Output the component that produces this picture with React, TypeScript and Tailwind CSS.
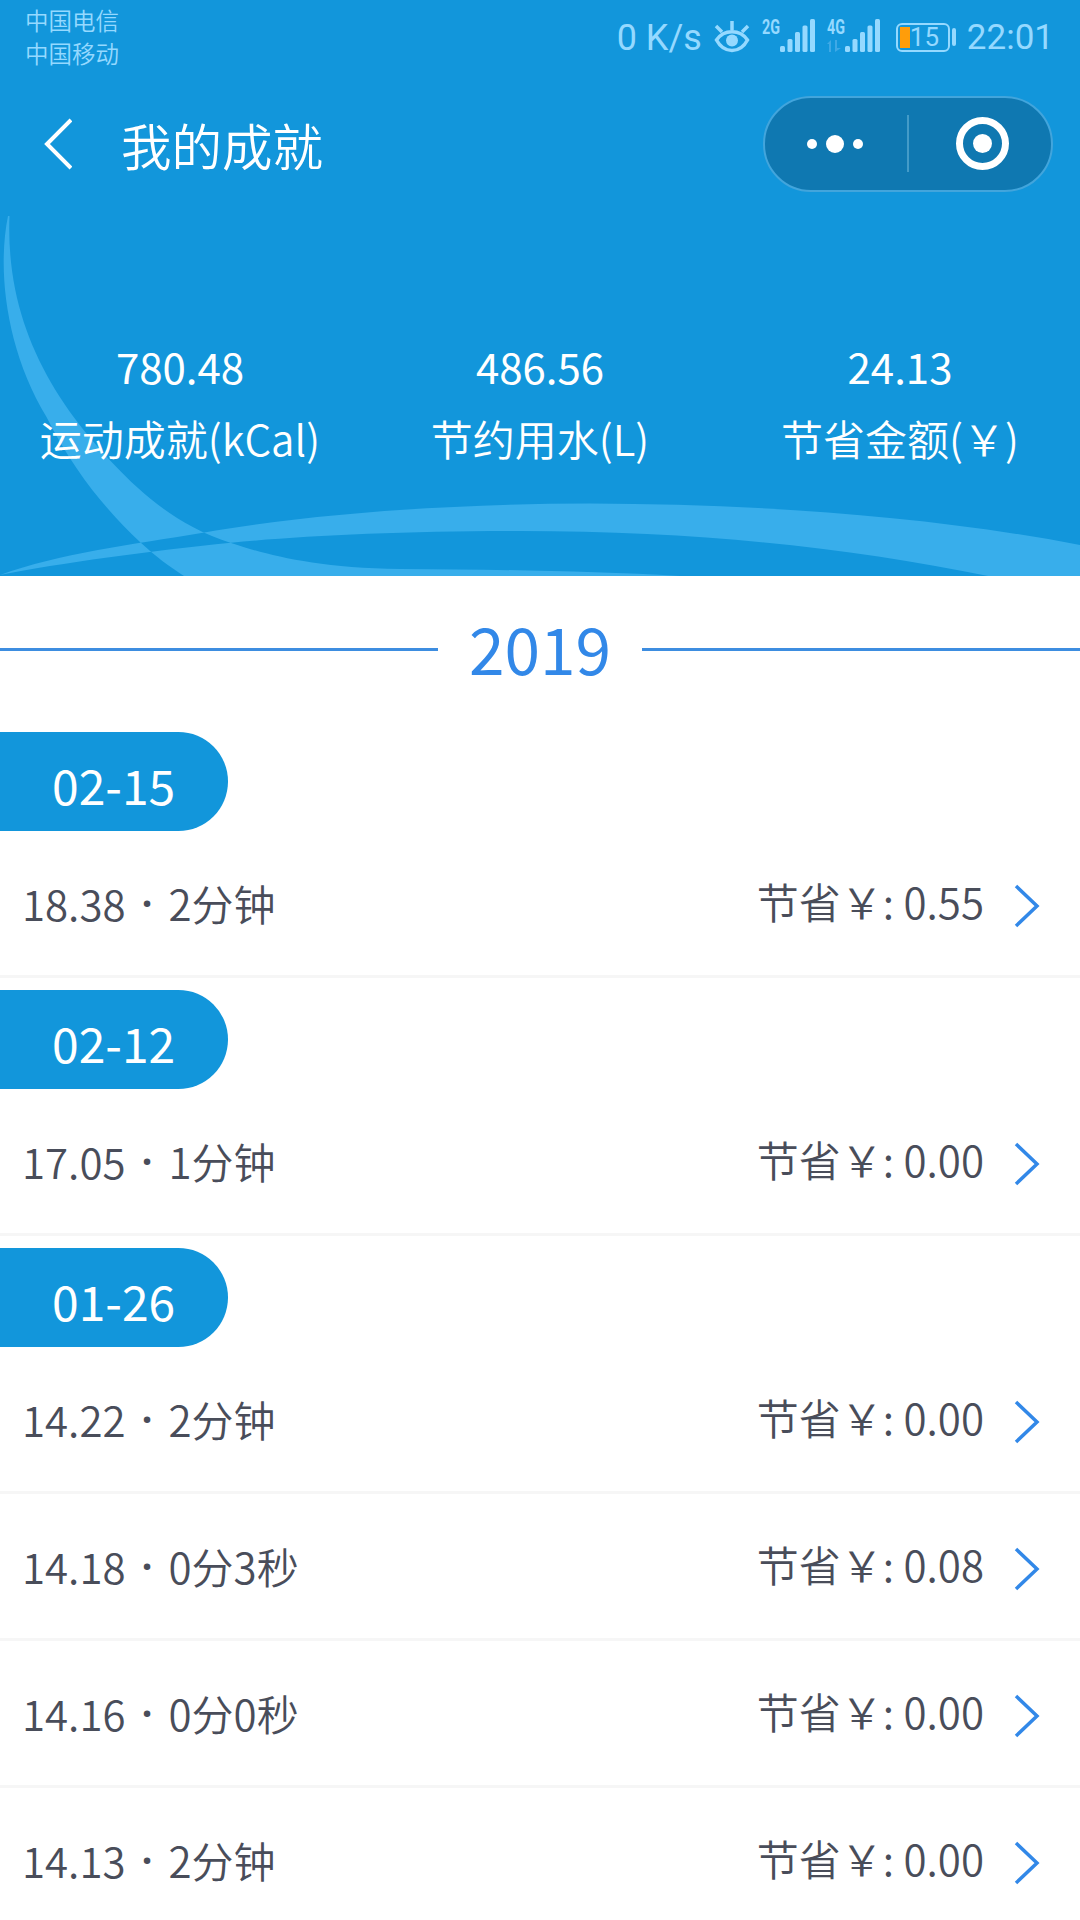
import React from 'react';

interface Entry {
  time: string;
  duration: string;
  saved: string;
}

interface Day {
  date: string;
  entries: Entry[];
}

const stats = [
  { value: '780.48', label: '运动成就(kCal)' },
  { value: '486.56', label: '节约用水(L)' },
  { value: '24.13', label: '节省金额(￥)' },
];

const days: Day[] = [
  { date: '02-15', entries: [{ time: '18.38', duration: '2分钟', saved: '0.55' }] },
  { date: '02-12', entries: [{ time: '17.05', duration: '1分钟', saved: '0.00' }] },
  {
    date: '01-26',
    entries: [
      { time: '14.22', duration: '2分钟', saved: '0.00' },
      { time: '14.18', duration: '0分3秒', saved: '0.08' },
      { time: '14.16', duration: '0分0秒', saved: '0.00' },
      { time: '14.13', duration: '2分钟', saved: '0.00' },
    ],
  },
];

const Signal = ({ label, data }: { label: string; data?: boolean }) => (
  <svg className="overflow-visible" width="54" height="36" viewBox="0 1 54 36" fill="#95d9ff">
    <text x="1" y="15.500" fontFamily="Roboto" fontSize="20" fontWeight="700" textLength="18" lengthAdjust="spacingAndGlyphs">
      {label}
    </text>
    {data && (
      <g fill="#3fa9e6">
        <path d="M1 26l4-4v12h-2v-8z" />
        <path d="M9 22h2v8h4l-6 4z" />
      </g>
    )}
    <rect x="19" y="28" width="5" height="6" rx="1.5" />
    <rect x="26.500" y="21" width="5" height="13" rx="1.5" />
    <rect x="34" y="14" width="5" height="20" rx="1.5" />
    <rect x="41.500" y="7.500" width="5" height="26.500" rx="1.5" />
    <rect x="49" y="1" width="5" height="33" rx="1.5" />
  </svg>
);

const StatusBar = () => (
  <div className="flex h-[75px] justify-between pl-[25px] pr-[26px] text-[#95d9ff]">
    <div className="flex flex-col pt-1 text-[23.5px] leading-[33px] font-[350]">
      <span>中国电信</span>
      <span>中国移动</span>
    </div>
    <div className="flex h-[74px] items-center font-[Roboto] text-[35px]">
      <span className="mr-[12px] pt-[2px] text-[36px]">0 K/s</span>
      <svg className="mr-[11px]" width="36" height="32" viewBox="0 0 36 32" fill="none" stroke="#95d9ff" strokeWidth="3.500">
        <path d="M2.500 19C10 8 26 8 33.500 19C26 33 10 33 2.500 19z" />
        <path d="M18 0v9M2 5l6 6M34 5l-6 6" />
        <circle cx="18" cy="19.500" r="6" fill="#95d9ff" stroke="none" />
      </svg>
      <span className="mr-[11px]"><Signal label="2G" /></span>
      <span className="mr-[16px]"><Signal label="4G" data /></span>
      <div className="mr-[11px] flex items-center gap-[2px]">
        <div className="flex h-[29px] w-[54px] items-center rounded-[6px] border-2 border-[#95d9ff] pl-[2px]">
          <span className="h-[21px] w-[10px] bg-[#ff9d0a]" />
          <span className="text-[26px] leading-none">15</span>
        </div>
        <span className="h-[18px] w-[4px] rounded-full bg-[#95d9ff]" />
      </div>
      <span className="pt-[2px]">22:01</span>
    </div>
  </div>
);

const TitleBar = () => (
  <div className="flex h-[140px] items-center pl-[44px] pr-[27px] pb-[3px]">
    <svg width="28" height="52" viewBox="0 0 28 52" fill="none" stroke="#fff" strokeWidth="4">
      <path d="M27 2L3 26L27 50" />
    </svg>
    <h1 className="ml-[49px] pt-px text-[50.5px] leading-none font-[350]">我的成就</h1>
    <div className="ml-auto flex h-[96px] w-[290px] items-center rounded-full border-2 border-[#42a5dc] bg-[#0f78b1]">
      <div className="flex w-[142px] items-center justify-center gap-[9px] pr-[2px]">
        <span className="size-[10px] rounded-full bg-white" />
        <span className="size-[18px] rounded-full bg-white" />
        <span className="size-[10px] rounded-full bg-white" />
      </div>
      <span className="h-[57px] w-[2px] bg-[#439bc8]" />
      <div className="flex flex-1 items-center justify-center pl-[5px]">
        <div className="flex size-[53px] items-center justify-center rounded-full border-[7px] border-white">
          <span className="size-[19px] rounded-full bg-white" />
        </div>
      </div>
    </div>
  </div>
);

const Chevron = () => (
  <svg className="mt-[5px]" width="26" height="44" viewBox="0 0 26 44" fill="none" stroke="#3288e8" strokeWidth="3.500">
    <path d="M2 2L23 22L2 42" />
  </svg>
);

const App = () => {
  return (
    <main className="h-[1920px] w-[1080px] overflow-hidden bg-white font-['Noto_Sans_CJK_SC',sans-serif] text-white">
      <header className="relative h-[576px] bg-[#1296db]">
        {/* crossing ribbons, even-odd so the overlap drops out */}
        <svg className="absolute inset-0" width="1080" height="576" viewBox="0 0 1080 576">
          <path
            fill="#38aeeb"
            fillRule="evenodd"
            d="M8 216C-3 270 6 350 46.500 417C74 472 108 512 140 542C155 556 170 567 184 576H680C590 571 500 569.500 400 569C310 568 262 553 231 543C190 530 160 508 138 488C60 415 5 330 9.500 216ZM0 575C60 553 130 545 203 532.700C310 514 450 503.500 590 503.500C760 504 930 516 1080 545V576H988C850 548 700 531 520 531C400 531 300 536 231 542.700C150 551 60 563 0 575Z"
          />
        </svg>
        <div className="relative">
          <StatusBar />
          <TitleBar />
          <div className="grid grid-cols-3 pt-[115px] text-center text-[42px] leading-[72px]">
            {stats.map((stat) => (
              <div key={stat.label}>
                <p>{stat.value}</p>
                <p className="font-[350]">{stat.label}</p>
              </div>
            ))}
          </div>
        </div>
      </header>

      <div className="flex h-[156px] items-center pb-[10px] text-[#3288e8]">
        <span className="h-[3px] flex-1 bg-[#3d8de0]" />
        <span className="w-[204px] pb-[5px] text-center text-[64px] leading-none">2019</span>
        <span className="h-[3px] flex-1 bg-[#3d8de0]" />
      </div>

      {days.map((day) => (
        <section key={day.date} className="mb-[12px] text-[#494d5a] font-[350]">
          <h2 className="flex h-[99px] w-[228px] items-center rounded-r-full bg-[#1296db] pl-[52px] pt-[4px] text-[48px] leading-none font-normal text-white">
            {day.date}
          </h2>
          {day.entries.map((entry) => (
            <div
              key={entry.time}
              className="flex h-[147px] items-center border-b-[3px] border-[#f6f6f6] pl-[22px] pr-[40px] text-[42px] leading-none"
            >
              <span>{entry.time}</span>
              <span className="w-[43px] text-center font-['Noto_Sans',sans-serif] font-semibold">·</span>
              <span>{entry.duration}</span>
              <span className="ml-auto mr-[30px] pb-[5px]">节省￥: {entry.saved}</span>
              <Chevron />
            </div>
          ))}
        </section>
      ))}
    </main>
  );
};

export default App;
